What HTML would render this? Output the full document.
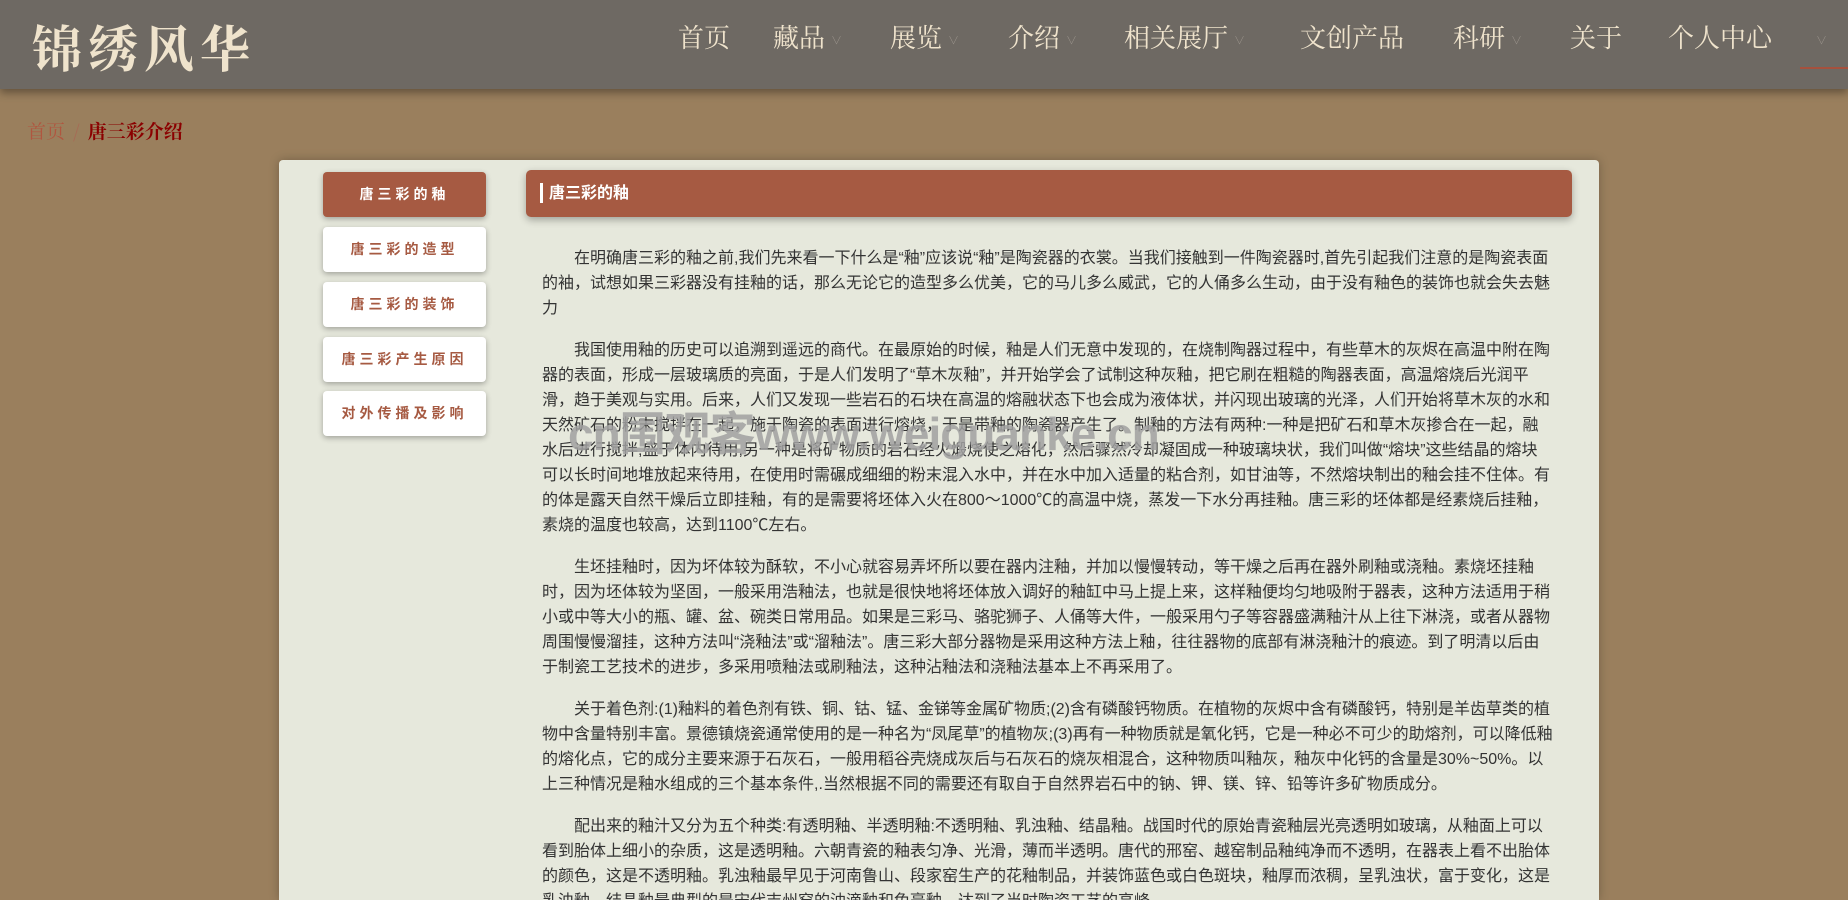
<!DOCTYPE html>
<html style="width:1848px;height:900px;overflow:hidden"><head><meta charset="utf-8"><style>
*{margin:0;padding:0;box-sizing:border-box}
body{width:1848px;height:900px;overflow:hidden;background:#9a7f5d;font-family:"Liberation Sans","Noto Sans CJK SC",sans-serif;position:relative}
.hd{position:absolute;left:0;top:0;width:1848px;height:89px;background:#6e6963;box-shadow:0 4px 8px rgba(0,0,0,.35);z-index:2}
.logo{position:absolute;left:32px;top:10px;font-family:"Noto Serif CJK SC",serif;font-size:50px;color:#efe3cc;letter-spacing:6px;font-weight:bold}
.nav a{position:absolute;top:18px;font-family:"Noto Serif CJK SC",serif;font-size:26px;color:#efe3cc;white-space:nowrap}
.nav i{font-style:normal;font-size:11px;color:#9c958d;margin-left:6px;vertical-align:middle}
.ul{position:absolute;left:1800px;top:67px;width:48px;height:2px;background:#a5513d}
.bc{position:absolute;left:27px;top:117px;font-family:"Noto Serif CJK SC",serif;font-size:19px}
.bc .a{color:#b0563f}.bc .s{color:#a76a55;margin:0 8px}.bc .b{color:#8b0000;font-weight:bold}
.panel{position:absolute;left:279px;top:160px;width:1320px;height:740px;background:#e6e8dc;border-radius:4px 4px 0 0;box-shadow:0 0 10px rgba(0,0,0,.25);overflow:hidden}
.mb{position:absolute;left:44px;width:163px;height:45px;background:#fff;border-radius:4px;box-shadow:0 2px 6px rgba(0,0,0,.3);color:#a65a42;font-size:14px;font-weight:bold;letter-spacing:4px;text-align:center;line-height:45px}
.mb.on{background:#a65a42;color:#fff}
.tb{position:absolute;left:247px;top:10px;width:1046px;height:47px;background:#a65a42;border-radius:5px;box-shadow:0 3px 8px rgba(0,0,0,.3);color:#fff;font-size:16px;font-weight:bold;line-height:47px;padding-left:16px}
.tb:before{content:"";position:absolute;left:14px;top:13px;width:3px;height:20px;background:#fff}
.tb span{margin-left:7px}
.ct{position:absolute;left:263px;top:86px;width:1011px;font-size:16px;line-height:25px;color:#333}
.ct p{text-indent:2em;margin-bottom:17px}
.wm{position:absolute;left:568px;top:398px;font-size:46px;font-weight:bold;color:rgba(160,160,160,.85);white-space:nowrap;z-index:3;letter-spacing:-1px}
</style></head><body>
<div class="hd">
<div class="logo">锦绣风华</div>
<div class="nav">
<a style="left:678px">首页</a>
<a style="left:773px">藏品<i>∨</i></a>
<a style="left:890px">展览<i>∨</i></a>
<a style="left:1008px">介绍<i>∨</i></a>
<a style="left:1124px">相关展厅<i>∨</i></a>
<a style="left:1300px">文创产品</a>
<a style="left:1453px">科研<i>∨</i></a>
<a style="left:1570px">关于</a>
<a style="left:1668px">个人中心</a>
<a style="left:1810px"><i>∨</i></a>
</div>
<div class="ul"></div>
</div>
<div class="bc"><span class="a">首页</span><span class="s">/</span><span class="b">唐三彩介绍</span></div>
<div class="panel">
<div class="mb on" style="top:12px">唐三彩的釉</div>
<div class="mb" style="top:67px">唐三彩的造型</div>
<div class="mb" style="top:122px">唐三彩的装饰</div>
<div class="mb" style="top:177px">唐三彩产生原因</div>
<div class="mb" style="top:231px">对外传播及影响</div>
<div class="tb"><span>唐三彩的釉</span></div>
<div class="ct">
<p>在明确唐三彩的釉之前,我们先来看一下什么是“釉”应该说“釉”是陶瓷器的衣裳。当我们接触到一件陶瓷器时,首先引起我们注意的是陶瓷表面的袖，试想如果三彩器没有挂釉的话，那么无论它的造型多么优美，它的马儿多么威武，它的人俑多么生动，由于没有釉色的装饰也就会失去魅力</p>
<p>我国使用釉的历史可以追溯到遥远的商代。在最原始的时候，釉是人们无意中发现的，在烧制陶器过程中，有些草木的灰烬在高温中附在陶器的表面，形成一层玻璃质的亮面，于是人们发明了“草木灰釉”，并开始学会了试制这种灰釉，把它刷在粗糙的陶器表面，高温熔烧后光润平滑，趋于美观与实用。后来，人们又发现一些岩石的石块在高温的熔融状态下也会成为液体状，并闪现出玻璃的光泽，人们开始将草木灰的水和天然矿石的粉末搅拌在一起，施于陶瓷的表面进行熔烧，于是带釉的陶瓷器产生了。制釉的方法有两种:一种是把矿石和草木灰掺合在一起，融水后进行搅拌,盛于体内待用,另一种是将矿物质的岩石经火煅烧使之熔化，然后骤然冷却凝固成一种玻璃块状，我们叫做“熔块”这些结晶的熔块可以长时间地堆放起来待用，在使用时需碾成细细的粉末混入水中，并在水中加入适量的粘合剂，如甘油等，不然熔块制出的釉会挂不住体。有的体是露天自然干燥后立即挂釉，有的是需要将坯体入火在800～1000℃的高温中烧，蒸发一下水分再挂釉。唐三彩的坯体都是经素烧后挂釉，素烧的温度也较高，达到1100℃左右。</p>
<p>生坯挂釉时，因为坏体较为酥软，不小心就容易弄坏所以要在器内注釉，并加以慢慢转动，等干燥之后再在器外刷釉或浇釉。素烧坯挂釉时，因为坯体较为坚固，一般采用浩釉法，也就是很快地将坯体放入调好的釉缸中马上提上来，这样釉便均匀地吸附于器表，这种方法适用于稍小或中等大小的瓶、罐、盆、碗类日常用品。如果是三彩马、骆驼狮子、人俑等大件，一般采用勺子等容器盛满釉汁从上往下淋浇，或者从器物周围慢慢溜挂，这种方法叫“浇釉法”或“溜釉法”。唐三彩大部分器物是采用这种方法上釉，往往器物的底部有淋浇釉汁的痕迹。到了明清以后由于制瓷工艺技术的进步，多采用喷釉法或刷釉法，这种沾釉法和浇釉法基本上不再采用了。</p>
<p>关于着色剂:(1)釉料的着色剂有铁、铜、钴、锰、金锑等金属矿物质;(2)含有磷酸钙物质。在植物的灰烬中含有磷酸钙，特别是羊齿草类的植物中含量特别丰富。景德镇烧瓷通常使用的是一种名为“凤尾草”的植物灰;(3)再有一种物质就是氧化钙，它是一种必不可少的助熔剂，可以降低釉的熔化点，它的成分主要来源于石灰石，一般用稻谷壳烧成灰后与石灰石的烧灰相混合，这种物质叫釉灰，釉灰中化钙的含量是30%~50%。以上三种情况是釉水组成的三个基本条件,.当然根据不同的需要还有取自于自然界岩石中的钠、钾、镁、锌、铅等许多矿物质成分。</p>
<p>配出来的釉汁又分为五个种类:有透明釉、半透明釉:不透明釉、乳浊釉、结晶釉。战国时代的原始青瓷釉层光亮透明如玻璃，从釉面上可以看到胎体上细小的杂质，这是透明釉。六朝青瓷的釉表匀净、光滑，薄而半透明。唐代的邢窑、越窑制品釉纯净而不透明，在器表上看不出胎体的颜色，这是不透明釉。乳浊釉最早见于河南鲁山、段家窑生产的花釉制品，并装饰蓝色或白色斑块，釉厚而浓稠，呈乳浊状，富于变化，这是乳浊釉。结晶釉最典型的是宋代吉州窑的油滴釉和兔毫釉，达到了当时陶瓷工艺的高峰。</p>
</div>
</div>
<div class="wm">cn围观客www.weiguanke.cn</div>
</body></html>
